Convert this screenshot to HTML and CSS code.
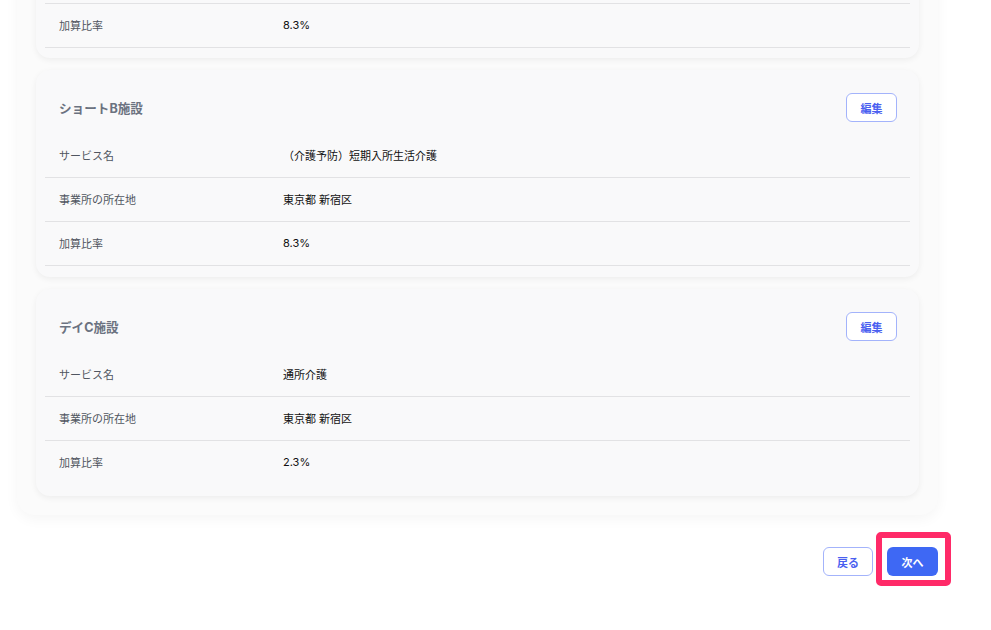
FILE: index.html
```html
<!DOCTYPE html>
<html lang="ja">
<head>
  <meta charset="utf-8">
  <link rel="stylesheet" href="styles.css">
</head>
<body>
  <div class="panel">
    <div class="facility scrolled">
      <div class="row"><span class="label">加算比率</span><span class="value">8.3%</span></div>
    </div>

    <div class="facility">
      <div class="facility-head">
        <h3 class="facility-title">ショートB施設</h3>
        <button class="btn-edit">編集</button>
      </div>
      <div class="row"><span class="label">サービス名</span><span class="value">（介護予防）短期入所生活介護</span></div>
      <div class="row"><span class="label">事業所の所在地</span><span class="value">東京都 新宿区</span></div>
      <div class="row"><span class="label">加算比率</span><span class="value">8.3%</span></div>
    </div>

    <div class="facility">
      <div class="facility-head">
        <h3 class="facility-title">デイC施設</h3>
        <button class="btn-edit">編集</button>
      </div>
      <div class="row"><span class="label">サービス名</span><span class="value">通所介護</span></div>
      <div class="row"><span class="label">事業所の所在地</span><span class="value">東京都 新宿区</span></div>
      <div class="row last"><span class="label">加算比率</span><span class="value">2.3%</span></div>
    </div>
  </div>

  <div class="actions">
    <button class="btn-back">戻る</button>
    <div class="next-wrap">
      <button class="btn-next">次へ</button>
      <span class="highlight"></span>
    </div>
  </div>
</body>
</html>
```

FILE: styles.css
```css
body {
  margin: 0;
  padding: 0 0 40px;
  background: #fff;
  font-family: Inter, "Noto Sans CJK JP", sans-serif;
  color: #222;
}

/* ページはスクロール済みの状態: 上のカードは最後の行だけ見える */
.panel {
  width: 883px;
  margin: -36px 0 0 17px;
  padding: 19px;
  background: #fbfbfb;
  border-radius: 18px;
  box-shadow: 0 4px 14px rgba(0, 0, 0, 0.045);
  display: flex;
  flex-direction: column;
  gap: 12px;
}

.facility {
  background: #f9f9fa;
  border-radius: 14px;
  box-shadow: 0 2px 6px rgba(0, 0, 0, 0.06);
  padding: 0 9px 11px;
}

.facility.scrolled {
  padding-top: 20px;
  padding-bottom: 10px;
}

.facility.scrolled .row {
  height: 45px;
  border-top: 1px solid #e2e2e4;
}

.facility-head {
  display: flex;
  align-items: center;
  justify-content: space-between;
  padding: 23px 13px 12px 14px;
}

.facility-title {
  margin: 0;
  font-size: 12.6px;
  font-weight: 700;
  color: #6b7280;
}

.btn-edit {
  width: 51px;
  height: 29px;
  border: 1px solid #a3b3fb;
  border-radius: 6px;
  background: #fff;
  color: #4a5ff0;
  font-family: inherit;
  font-size: 11px;
  font-weight: 700;
  padding: 0;
}

.row {
  display: flex;
  align-items: center;
  box-sizing: border-box;
  height: 44px;
  padding: 0 0 2px 14px;
  border-bottom: 1px solid #e2e2e4;
  font-size: 11px;
}

.row.last {
  border-bottom: none;
}

.label {
  width: 224px;
  color: #505660;
}

.value {
  color: #111;
}

.actions {
  display: flex;
  justify-content: flex-end;
  gap: 14px;
  width: 921px;
  margin: 32px 0 0 17px;
}

.btn-back,
.btn-next {
  height: 29px;
  border-radius: 6px;
  font-family: inherit;
  font-size: 11px;
  font-weight: 700;
  padding: 0;
}

.btn-back {
  width: 50px;
  border: 1px solid #a3b3fb;
  background: #fff;
  color: #4a5ff0;
}

.next-wrap {
  position: relative;
}

.btn-next {
  display: block;
  width: 51px;
  border: none;
  background: #3e68f4;
  color: #fff;
}

.highlight {
  position: absolute;
  top: -15px;
  left: -11px;
  right: -13px;
  bottom: -10px;
  border: 6px solid #ff2a68;
  border-radius: 5px;
}
```
